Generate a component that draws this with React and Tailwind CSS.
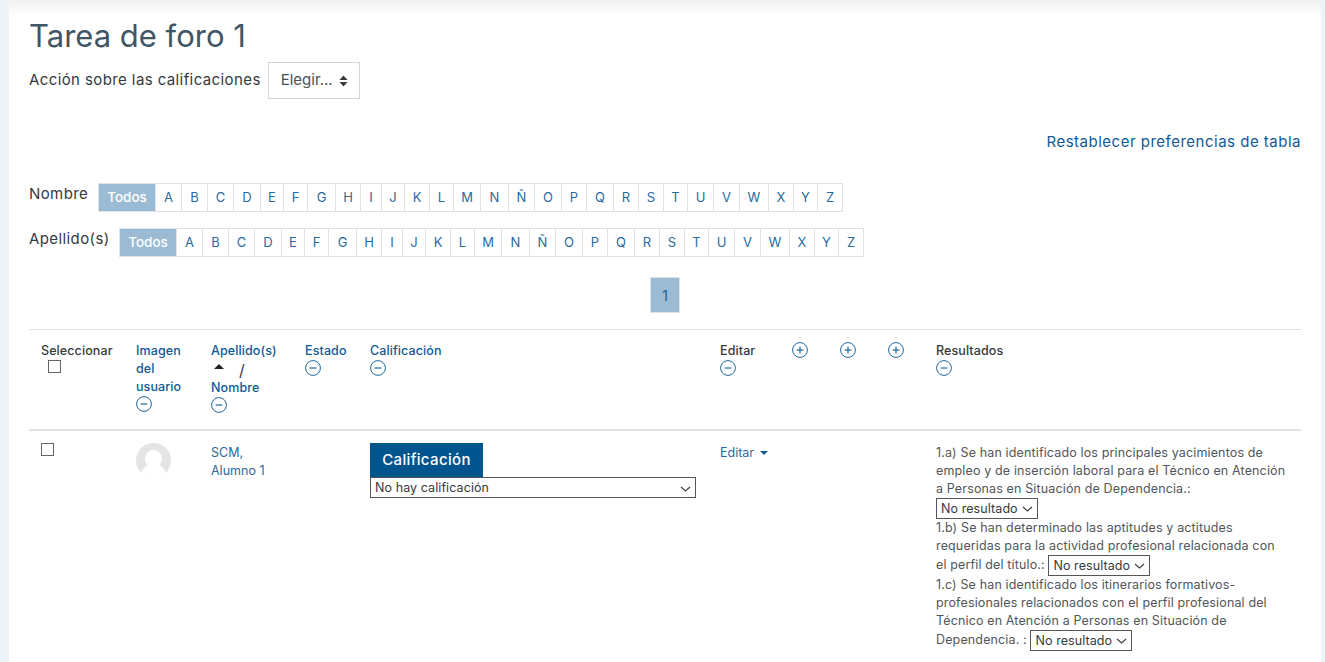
const FONT = "font-['Inter','Liberation_Sans',sans-serif]";

const LETTERS = [
  ["A", "w-[26px]"], ["B", "w-[26px]"], ["C", "w-[26px]"], ["D", "w-[27px]"], ["E", "w-[23px]"],
  ["F", "w-[24px]"], ["G", "w-[28px]"], ["H", "w-[25px]"], ["I", "w-[21px]"], ["J", "w-[23px]"],
  ["K", "w-[25px]"], ["L", "w-[24px]"], ["M", "w-[27px]"], ["N", "w-[28px]"], ["Ñ", "w-[26px]"],
  ["O", "w-[27px]"], ["P", "w-[25px]"], ["Q", "w-[27px]"], ["R", "w-[25px]"], ["S", "w-[25px]"],
  ["T", "w-[24px]"], ["U", "w-[26px]"], ["V", "w-[26px]"], ["W", "w-[29px]"], ["X", "w-[25px]"],
  ["Y", "w-[24px]"], ["Z", "w-[25px]"],
];

function CircleIcon({ plus }) {
  return (
    <svg width="16" height="16" viewBox="0 0 16 16" fill="none" stroke="#1f669c" strokeWidth="1" className="block">
      <circle cx="8" cy="8" r="7.4" />
      <path d="M4.6 8h6.8" strokeWidth="1.2" />
      {plus ? <path d="M8 4.6v6.8" strokeWidth="1.2" /> : null}
    </svg>
  );
}

function LetterBar({ label, labelClass }) {
  return (
    <div className="flex items-start">
      <span className={`text-[15px] leading-[22px] tracking-[0.4px] text-[#343a40] ${labelClass}`}>{label}</span>
      <div className="flex h-[29px] border border-[#dee2e6] text-[13px] text-[#2a6a9e]">
        <span className="flex w-[56px] items-center justify-center bg-[#9bbbd4] text-[13.5px] font-medium text-white">Todos</span>
        {LETTERS.map(([letter, width]) => (
          <span key={letter} className={`flex items-center justify-center border-l border-[#dee2e6] ${width}`}>
            {letter}
          </span>
        ))}
      </div>
    </div>
  );
}

function SmallSelect({ children, wide }) {
  return (
    <span
      className={`h-[21px] items-center justify-between border border-[#555] bg-white px-[4px] align-middle text-[12.5px] tracking-[0.08px] text-[#343a40] ${
        wide ? "flex w-[326px] pt-[2px]" : "inline-flex w-[102px]"
      }`}
    >
      {children}
      <svg width="11" height="6" viewBox="0 0 11 6" fill="none" stroke="#444" strokeWidth="1.3">
        <path d="M1 1l4.500 4 4.500-4" />
      </svg>
    </span>
  );
}

function HeadCell({ children, className = "" }) {
  return <th className={`px-3 pt-[12px] pb-[16px] text-left align-top text-[12.5px] leading-[18px] font-medium tracking-[0.1px] ${className}`}>{children}</th>;
}

export default function App() {
  return (
    <div className={`flex h-[662px] overflow-hidden bg-[#edf4f8] ${FONT}`}>
      <div className="w-[9px] shrink-0" />
      <main className="min-w-0 flex-1 bg-[linear-gradient(to_bottom,#f0f0f0_0px,#ffffff_16px)] px-[20px]">
        <h1 className="pt-[16px] text-[31px] leading-[40px] font-normal text-[#3f5666]">Tarea de foro 1</h1>

        <div className="mt-[6px] flex items-center gap-[7px]">
          <span className="text-[15px] tracking-[0.4px] text-[#343a40]">Acción sobre las calificaciones</span>
          <div className="flex h-[37px] w-[92px] items-center justify-between border border-[#ced4da] pr-[11px] pl-[12px] text-[15px] text-[#495057]">
            Elegir...
            <svg width="9" height="12" viewBox="0 0 9 12" fill="#343a40">
              <path d="M4.500 0.500L8.500 5H0.500zM4.500 11.500L0.500 7H8.500z" />
            </svg>
          </div>
        </div>

        <div className="mt-[32px] text-right text-[15px] leading-[22px] tracking-[0.5px] text-[#0f5a96]">Restablecer preferencias de tabla</div>

        <div className="mt-[30px]">
          <LetterBar label="Nombre" labelClass="w-[69px]" />
        </div>
        <div className="mt-[16px]">
          <LetterBar label="Apellido(s)" labelClass="w-[90px]" />
        </div>

        <div className="mt-[20px] flex justify-center">
          <span className="flex h-[36px] w-[30px] items-center justify-center border border-[#dee2e6] bg-[#9bbbd4] text-[14px] text-[#1f5f92]">1</span>
        </div>

        <table className="mt-[16px] w-full table-fixed border-collapse text-[#0f5a96]">
          <colgroup>
            <col className="w-[95px]" />
            <col className="w-[75px]" />
            <col className="w-[94px]" />
            <col className="w-[65px]" />
            <col className="w-[350px]" />
            <col className="w-[72px]" />
            <col className="w-[48px]" />
            <col className="w-[48px]" />
            <col className="w-[48px]" />
            <col />
          </colgroup>
          <thead>
            <tr className="border-t border-b-2 border-t-[#dee2e6] border-b-[#dee2e6]">
              <HeadCell className="text-[#343a40]">
                Seleccionar
                <span className="ml-[7px] block h-[13px] w-[13px] border border-[#666] bg-white" />
              </HeadCell>
              <HeadCell>
                Imagen del usuario
                <CircleIcon />
              </HeadCell>
              <HeadCell>
                Apellido(s)
                <span className="flex h-[19px] items-center text-[#343a40]">
                  <svg width="12" height="6" viewBox="0 0 12 6" fill="#222" className="mr-[14px] ml-[2px] -translate-y-[3px]">
                    <path d="M6 0l5 5H1z" />
                  </svg>
                  <span className="text-[16px] font-normal">/</span>
                </span>
                Nombre
                <CircleIcon />
              </HeadCell>
              <HeadCell>
                Estado
                <CircleIcon />
              </HeadCell>
              <HeadCell>
                Calificación
                <CircleIcon />
              </HeadCell>
              <HeadCell className="text-[#343a40]">
                Editar
                <CircleIcon />
              </HeadCell>
              <HeadCell><CircleIcon plus /></HeadCell>
              <HeadCell><CircleIcon plus /></HeadCell>
              <HeadCell><CircleIcon plus /></HeadCell>
              <HeadCell className="text-[#343a40]">
                Resultados
                <CircleIcon />
              </HeadCell>
            </tr>
          </thead>
          <tbody>
            <tr>
              <td className="px-3 pt-[12px] align-top">
                <span className="block h-[13px] w-[13px] border border-[#666] bg-white" />
              </td>
              <td className="px-3 pt-[12px] align-top">
                <svg width="35" height="35" viewBox="0 0 35 35" className="block">
                  <defs>
                    <clipPath id="avatar-clip"><circle cx="17.500" cy="17.500" r="17.500" /></clipPath>
                  </defs>
                  <g clipPath="url(#avatar-clip)">
                    <rect width="35" height="35" fill="#e4e4e4" />
                    <circle cx="17.500" cy="15.500" r="8.500" fill="#ffffff" />
                    <path d="M3 35c2-7 5-11 9-13h11c4 2 7 6 9 13z" fill="#ffffff" />
                  </g>
                </svg>
              </td>
              <td className="px-3 pt-[13px] align-top text-[12.5px] leading-[18px] text-[#2a6a9e]">
                SCM,<br />Alumno 1
              </td>
              <td />
              <td className="px-3 pt-[12px] align-top">
                <div className="flex h-[34px] w-[113px] items-center justify-center bg-[#00558f] text-[15px] font-medium tracking-[0.35px] text-white">Calificación</div>
                <SmallSelect wide>No hay calificación</SmallSelect>
              </td>
              <td className="px-3 pt-[13px] align-top text-[12.5px] leading-[18px] text-[#2a6a9e]" colSpan={4}>
                <span className="inline-flex items-center gap-[6px]">
                  Editar
                  <svg width="8" height="4" viewBox="0 0 8 4" fill="#0f5a96"><path d="M0 0h8L4 4z" /></svg>
                </span>
              </td>
              <td className="px-3 pt-[13px] align-top text-[12.5px] leading-[18px] tracking-[0.14px] text-[#50565c]">
                1.a) Se han identificado los principales yacimientos de empleo y de inserción laboral para el Técnico en Atención a Personas en Situación de Dependencia.:{" "}
                <SmallSelect>No resultado</SmallSelect>
                <br />
                1.b) Se han determinado las aptitudes y actitudes requeridas para la actividad profesional relacionada con el perfil del título.:{" "}
                <SmallSelect>No resultado</SmallSelect>
                <br />
                1.c) Se han identificado los itinerarios formativos-profesionales relacionados con el perfil profesional del Técnico en Atención a Personas en Situación de Dependencia. :{" "}
                <SmallSelect>No resultado</SmallSelect>
              </td>
            </tr>
          </tbody>
        </table>
      </main>
      <div className="w-[4px] shrink-0" />
    </div>
  );
}
